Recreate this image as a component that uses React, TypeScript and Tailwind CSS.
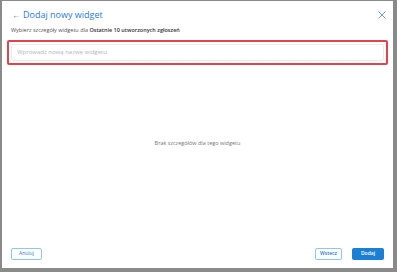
import React from "react";

export default function App() {
  return (
    <div
      className="w-[397px] h-[272px] bg-[#8a8a8a] pt-[1px] pl-[2px] pr-[4px] pb-[4px] overflow-hidden"
      style={{ fontFamily: '"Open Sans", "Noto Sans", sans-serif' }}
    >
      <div className="w-full h-full bg-white flex flex-col">
        <div className="flex items-start justify-between pl-[10px] pr-[7px] pt-[8px]">
          <div className="flex items-center h-[12px] text-[#2a7ad0]">
            <span className="text-[8px] leading-[12px] mr-[3px]">←</span>
            <span className="text-[9px] leading-[12px]">Dodaj nowy widget</span>
          </div>
          <svg width="8" height="8" viewBox="0 0 8 8" className="mt-[2px]">
            <path d="M0.5 0.5 L7.5 7.5 M7.5 0.5 L0.5 7.5" stroke="#6d9fe0" strokeWidth="1" fill="none" />
          </svg>
        </div>
        <div className="pl-[9px] mt-[5px] text-[5.5px] leading-[8px] text-[#555]">
          Wybierz szczegóły widgetu dla <span className="font-semibold text-[#333]">Ostatnie 10 utworzonych zgłoszeń</span>
        </div>
        <div className="mx-[5px] mt-[6px] border-2 border-[#e0454e] rounded-[2px] p-[2px]">
          <div className="h-[17px] border border-[#ebebeb] rounded-[2px] flex items-center pl-[5px] text-[6px] text-[#b5b5b5]">
            Wprowadź nową nazwę widgetu
          </div>
        </div>
        <div className="mt-[74px] text-center text-[5.5px] leading-[8px] text-[#777]">
          Brak szczegółów dla tego widgetu
        </div>
        <div className="flex-1" />
        <div className="flex items-center justify-between px-[9px] pb-[8px]">
          <div className="w-[31px] h-[12px] border border-[#8cc6f2] rounded-[2px] flex items-center justify-center text-[5px] text-[#2a7ad0]">
            Anuluj
          </div>
          <div className="flex items-center gap-[10px]">
            <div className="w-[27px] h-[12px] border border-[#8cc6f2] rounded-[2px] flex items-center justify-center text-[5px] font-semibold text-[#2a7ad0]">
              Wstecz
            </div>
            <div className="w-[32px] h-[12px] bg-[#1b7fd4] rounded-[2px] flex items-center justify-center text-[5px] font-semibold text-white">
              Dodaj
            </div>
          </div>
        </div>
      </div>
    </div>
  );
}
